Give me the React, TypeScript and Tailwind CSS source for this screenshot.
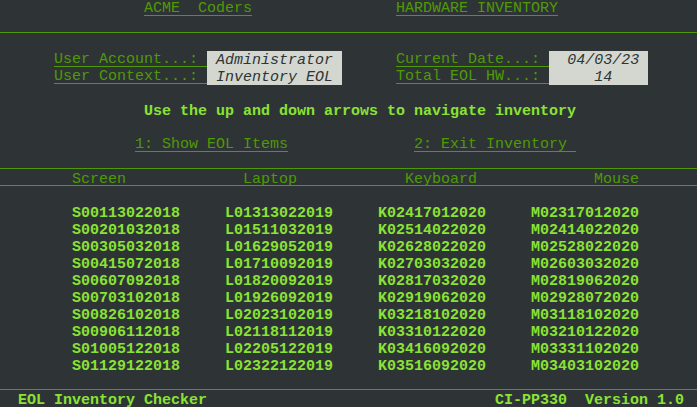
import React from "react";

const rows: string[][] = [
  ["S00113022018", "L01313022019", "K02417012020", "M02317012020"],
  ["S00201032018", "L01511032019", "K02514022020", "M02414022020"],
  ["S00305032018", "L01629052019", "K02628022020", "M02528022020"],
  ["S00415072018", "L01710092019", "K02703032020", "M02603032020"],
  ["S00607092018", "L01820092019", "K02817032020", "M02819062020"],
  ["S00703102018", "L01926092019", "K02919062020", "M02928072020"],
  ["S00826102018", "L02023102019", "K03218102020", "M03118102020"],
  ["S00906112018", "L02118112019", "K03310122020", "M03210122020"],
  ["S01005122018", "L02205122019", "K03416092020", "M03331102020"],
  ["S01129122018", "L02322122019", "K03516092020", "M03403102020"],
];

function Row({ children, line }: { children?: React.ReactNode; line?: boolean }) {
  return (
    <div className="h-[17px] whitespace-pre">
      <div className={"h-[16px] " + (line ? "border-b border-[#4e9a06]" : "")}>{children}</div>
    </div>
  );
}

function T({ children, bold }: { children: React.ReactNode; bold?: boolean }) {
  return (
    <span className={"inline-block h-[16px] pt-[3px] leading-[13px] align-top " + (bold ? "font-bold text-[#8ae234]" : "")}>
      {children}
    </span>
  );
}

function U({ children }: { children: React.ReactNode }) {
  return (
    <span className="inline-block h-[16px] pt-[3px] leading-[12px] border-b border-[#4e9a06] align-top">{children}</span>
  );
}

function Box({ children }: { children: React.ReactNode }) {
  return (
    <span className="inline-block h-[17px] pt-[3px] leading-[13px] bg-[#d3d7cf] text-[#2e3436] italic align-top">
      {children}
    </span>
  );
}

export default function App() {
  return (
    <div
      className="w-[697px] h-[407px] overflow-hidden bg-[#2e3436] text-[#4e9a06] text-[15px]"
      style={{ fontFamily: '"Liberation Mono", "Courier New", monospace' }}
    >
      <Row>
        <T>{"                "}</T>
        <U>ACME  Coders</U>
        <T>{"                "}</T>
        <U>HARDWARE INVENTORY</U>
      </Row>
      <Row line />
      <Row />
      <Row>
        <T>{"      "}</T>
        <U>User Account...: </U>
        <Box> Administrator </Box>
        <T>{"      "}</T>
        <U>Current Date...: </U>
        <Box>  04/03/23 </Box>
      </Row>
      <Row>
        <T>{"      "}</T>
        <U>User Context...: </U>
        <Box> Inventory EOL </Box>
        <T>{"      "}</T>
        <U>Total EOL HW...: </U>
        <Box>     14    </Box>
      </Row>
      <Row />
      <Row>
        <T bold>{"                Use the up and down arrows to navigate inventory"}</T>
      </Row>
      <Row />
      <Row>
        <T>{"               "}</T>
        <U>1: Show EOL Items</U>
        <T>{"              "}</T>
        <U>2: Exit Inventory </U>
      </Row>
      <Row line />
      <Row line>
        <T>{"        Screen             Laptop            Keyboard             Mouse"}</T>
      </Row>
      <Row />
      {rows.map((r, i) => (
        <Row key={i}>
          <T bold>{"        " + r.join("     ")}</T>
        </Row>
      ))}
      <Row line />
      <Row>
        <T bold>{"  EOL Inventory Checker                                CI-PP330  Version 1.0"}</T>
      </Row>
    </div>
  );
}
